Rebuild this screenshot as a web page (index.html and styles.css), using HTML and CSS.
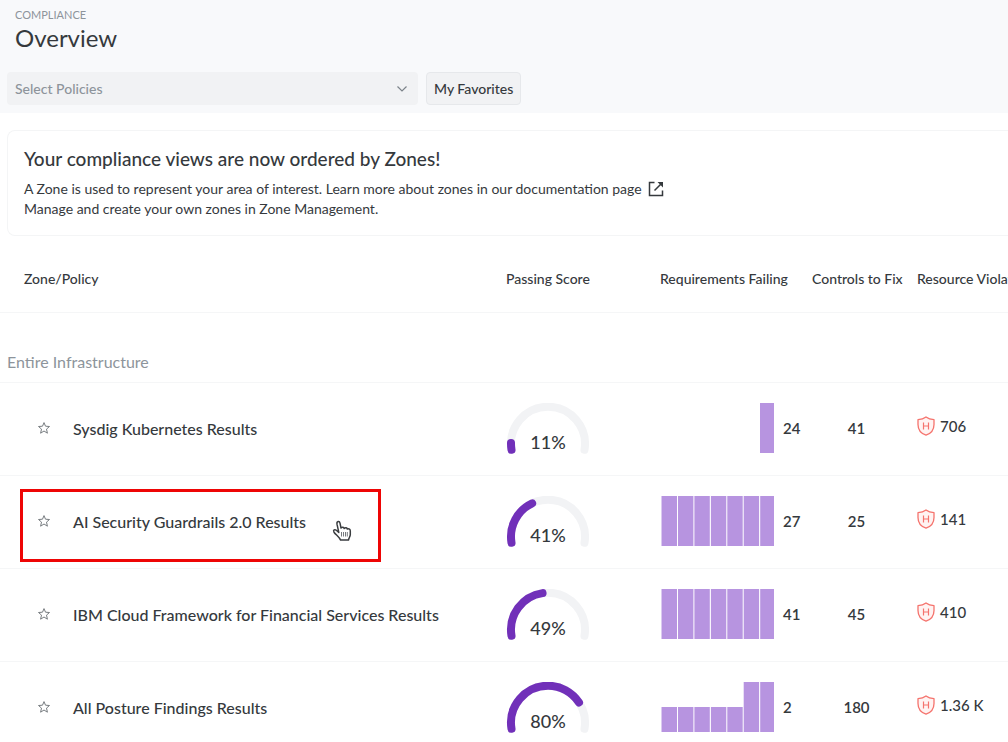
FILE: index.html
```html
<!DOCTYPE html>
<html lang="en">
<head>
<meta charset="utf-8">
<meta name="viewport" content="width=device-width, initial-scale=1">
<title>Compliance Overview</title>
<link rel="stylesheet" href="styles.css">
</head>
<body>
<svg class="symbols" aria-hidden="true">
  <symbol id="star" viewBox="0 0 14 14">
    <path d="M7 1.6 8.5 5.2 12.5 5.5 9.5 8.1 10.4 12.2 7 10 3.6 12.2 4.5 8.1 1.5 5.5 5.5 5.2Z" fill="none" stroke="#777c80" stroke-linejoin="round"/>
  </symbol>
  <symbol id="shield" viewBox="0 0 18 20">
    <path d="M9 1C11.2 2.7 13.8 3.5 17 3.7V8.500C17 14 14 17.500 9 19.200 4 17.500 1 14 1 8.500V3.700C4.200 3.500 6.800 2.700 9 1Z" fill="#fff3f2" stroke="#f5736d" stroke-width="1.300" stroke-linejoin="round"/>
    <path d="M6.500 6.500V13.500M11.500 6.500V13.500M6.500 10H11.500" fill="none" stroke="#f5736d" stroke-width="1.200"/>
  </symbol>
</svg>
<div class="page">
  <header class="top">
    <p class="crumb">COMPLIANCE</p>
    <h1 class="title">Overview</h1>
    <div class="filters">
      <div class="picker">
        <select class="select" aria-label="Select Policies"><option>Select Policies</option></select>
        <svg class="chevron" width="12" height="8" viewBox="0 0 12 8" aria-hidden="true"><path d="M1.500 1.500 6 6 10.500 1.500" fill="none" stroke="#7c838a" stroke-width="1.200"/></svg>
      </div>
      <button class="button" type="button">My Favorites</button>
    </div>
  </header>
  <main>
    <section class="notice">
      <h2 class="notice-title">Your compliance views are now ordered by Zones!</h2>
      <p class="notice-text">A Zone is used to represent your area of interest. Learn more about zones in our <a class="link" href="#docs">documentation page<svg class="external" width="16" height="16" viewBox="0 0 16 16" aria-hidden="true"><path d="M6.500 1.500H1.500V14.500H14.500V9.500M6.500 9.500 13.500 2.500" fill="none" stroke="#35393d" stroke-width="1.500"/><path d="M9.500 1H15V6.500Z" fill="#35393d"/></svg></a></p>
      <p class="notice-text">Manage and create your own zones in <a class="link" href="#zones">Zone Management.</a></p>
    </section>
    <table class="table">
      <thead>
        <tr>
          <th class="col-name" scope="col">Zone/Policy</th>
          <th class="col-score" scope="col">Passing Score</th>
          <th class="col-req" scope="col">Requirements Failing</th>
          <th class="col-controls" scope="col">Controls to Fix</th>
          <th class="col-violations" scope="col">Resource Violations</th>
        </tr>
      </thead>
      <tbody>
        <tr class="group"><th colspan="5" scope="colgroup">Entire Infrastructure</th></tr>
        <tr class="row">
          <td><div class="name"><button class="fav" type="button" aria-label="Add to favorites"><svg width="14" height="14"><use href="#star"/></svg></button><a class="policy" href="#kubernetes">Sysdig Kubernetes Results</a></div></td>
          <td class="score"><svg class="gauge" width="84" height="52" viewBox="0 0 84 52"><path class="track" d="M5.500 46.800A37 37 0 1 1 78.500 46.800"/><path class="value" pathLength="198" stroke-dasharray="10.700 400" d="M5.500 46.800A37 37 0 1 1 78.500 46.800"/><text class="percent" x="42" y="46">11%</text></svg></td>
          <td><div class="req"><svg class="bars" width="113" height="50" viewBox="0 0 113 50"><path d="M99 0H113V50H99Z"/></svg><span>24</span></div></td>
          <td class="controls">41</td>
          <td><div class="violations"><svg width="18" height="20"><use href="#shield"/></svg><span>706</span></div></td>
        </tr>
        <tr class="row">
          <td class="marked"><div class="name"><button class="fav" type="button" aria-label="Add to favorites"><svg width="14" height="14"><use href="#star"/></svg></button><a class="policy" href="#ai">AI Security Guardrails 2.0 Results</a></div>
            <div class="highlight"><svg class="pointer" width="20" height="22" viewBox="0 0 20 22" aria-hidden="true"><path d="M6.800 12.500 5 4.200C4.500 1 7.500 .800 8 3.200L9 8C10.200 6.800 11.800 7.200 12.200 8.500 13.500 7.300 15 7.800 15.300 9 17 8.300 18.500 9.500 18.300 11.300V14.500C18.300 16.500 17 17.500 16.500 20H8.500C7.500 17 4 15 2 12.200 .800 10 2.800 9 4.300 10.300L6.800 12.500Z" fill="#fff" stroke="#3a3d40" stroke-width="1.500" stroke-linejoin="round"/><path d="M9.500 12V16.500M11.500 12V16.500M13.500 12V16.500M15.300 12V16.500" stroke="#777b7f"/></svg></div></td>
          <td class="score"><svg class="gauge" width="84" height="52" viewBox="0 0 84 52"><path class="track" d="M5.500 46.800A37 37 0 1 1 78.500 46.800"/><path class="value" pathLength="198" stroke-dasharray="73.700 400" d="M5.500 46.800A37 37 0 1 1 78.500 46.800"/><text class="percent" x="42" y="46">41%</text></svg></td>
          <td><div class="req"><svg class="bars" width="113" height="50" viewBox="0 0 113 50"><path d="M.500 0h15.500v50H.500ZM17 0h15.400v50H17ZM33.400 0h15.400v50H33.400ZM49.900 0h15.400v50H49.900ZM66.300 0h15.400v50H66.300ZM82.700 0h15.400v50H82.700ZM99.200 0H113v50H99.200Z"/></svg><span>27</span></div></td>
          <td class="controls">25</td>
          <td><div class="violations"><svg width="18" height="20"><use href="#shield"/></svg><span>141</span></div></td>
        </tr>
        <tr class="row">
          <td><div class="name"><button class="fav" type="button" aria-label="Add to favorites"><svg width="14" height="14"><use href="#star"/></svg></button><a class="policy" href="#ibm">IBM Cloud Framework for Financial Services Results</a></div></td>
          <td class="score"><svg class="gauge" width="84" height="52" viewBox="0 0 84 52"><path class="track" d="M5.500 46.800A37 37 0 1 1 78.500 46.800"/><path class="value" pathLength="198" stroke-dasharray="90.500 400" d="M5.500 46.800A37 37 0 1 1 78.500 46.800"/><text class="percent" x="42" y="46">49%</text></svg></td>
          <td><div class="req"><svg class="bars" width="113" height="50" viewBox="0 0 113 50"><path d="M.500 0h15.500v50H.500ZM17 0h15.400v50H17ZM33.400 0h15.400v50H33.400ZM49.900 0h15.400v50H49.900ZM66.300 0h15.400v50H66.300ZM82.700 0h15.400v50H82.700ZM99.200 0H113v50H99.200Z"/></svg><span>41</span></div></td>
          <td class="controls">45</td>
          <td><div class="violations"><svg width="18" height="20"><use href="#shield"/></svg><span>410</span></div></td>
        </tr>
        <tr class="row">
          <td><div class="name"><button class="fav" type="button" aria-label="Add to favorites"><svg width="14" height="14"><use href="#star"/></svg></button><a class="policy" href="#posture">All Posture Findings Results</a></div></td>
          <td class="score"><svg class="gauge" width="84" height="52" viewBox="0 0 84 52"><path class="track" d="M5.500 46.800A37 37 0 1 1 78.500 46.800"/><path class="value" pathLength="198" stroke-dasharray="155.600 400" d="M5.500 46.800A37 37 0 1 1 78.500 46.800"/><text class="percent" x="42" y="46">80%</text></svg></td>
          <td><div class="req"><svg class="bars" width="113" height="50" viewBox="0 0 113 50"><path d="M.500 25h15.500v25H.500ZM17 25h15.400v25H17ZM33.400 25h15.400v25H33.400ZM49.900 25h15.400v25H49.900ZM66.300 25h15.400v25H66.300ZM82.700 0h15.400v50H82.700ZM99.200 0H113v50H99.200Z"/></svg><span>2</span></div></td>
          <td class="controls">180</td>
          <td><div class="violations"><svg width="18" height="20"><use href="#shield"/></svg><span>1.36 K</span></div></td>
        </tr>
      </tbody>
    </table>
  </main>
</div>
</body>
</html>
```

FILE: styles.css
```css
* {
  box-sizing: border-box;
}

body {
  margin: 0;
  background: #fff;
  color: #35393d;
  font-family: Lato, "Open Sans", sans-serif;
  font-size: 15px;
  font-weight: 500;
}

h1, h2, p {
  margin: 0;
}

svg {
  display: block;
  flex: none;
}

button, select {
  font: inherit;
  color: inherit;
}

a {
  color: inherit;
  text-decoration: none;
}

.symbols {
  display: none;
}

.page {
  overflow: hidden;
}

.top {
  padding: 8px 7px;
  background: #f8f9fb;
}

.crumb {
  padding-left: 8px;
  color: #8d949b;
  font-size: 11px;
  font-weight: 400;
  line-height: 14px;
}

.title {
  padding-left: 8px;
  font-size: 24px;
  font-weight: 400;
  line-height: 32px;
}

.filters {
  display: flex;
  gap: 8px;
  margin-top: 18px;
}

.picker {
  display: grid;
  flex: 0 1 411px;
  align-items: center;
}

.select, .chevron {
  grid-area: 1 / 1;
}

.chevron {
  justify-self: end;
  margin-right: 10px;
  pointer-events: none;
}

.select {
  width: 100%;
  height: 33px;
  padding: 0 8px;
  border: 0;
  border-radius: 4px;
  background: #f1f2f4;
  color: #8d949b;
  font-size: 14px;
  appearance: none;
}

.button {
  height: 33px;
  padding: 0 7px;
  border: 1px solid #e6e8eb;
  border-radius: 4px;
  background: #f1f2f4;
  font-size: 14px;
}

.notice {
  margin: 17px 0 0 7px;
  padding: 16px;
  border: 1px solid #f4f5f6;
  border-right: 0;
  border-radius: 8px 0 0 8px;
}

.notice-title {
  margin-bottom: 8px;
  font-size: 19px;
  font-weight: 500;
  line-height: 24px;
}

.notice-text {
  font-size: 14px;
  font-weight: 400;
  line-height: 20px;
}

.link {
  display: inline-flex;
  align-items: center;
  gap: 6px;
}

.table {
  width: 100%;
  border-collapse: separate;
  border-spacing: 0;
  table-layout: fixed;
}

th, td {
  padding: 0 8px;
  border-bottom: 1px solid #f5f6f7;
  text-align: left;
  white-space: nowrap;
}

thead th {
  height: 77px;
  padding-top: 8px;
  font-size: 14px;
  font-weight: 500;
}

thead .col-name {
  padding-left: 24px;
}

.col-score {
  width: 154px;
}

.col-req {
  width: 152px;
}

.col-controls {
  width: 105px;
}

.col-violations {
  width: 99px;
}

.group th {
  height: 70px;
  padding: 28px 7px 0;
  color: #8d949b;
  font-size: 16px;
  font-weight: 400;
}

.row td {
  height: 93px;
  padding-bottom: 2px;
}

.row .score {
  padding-bottom: 0;
}

.name {
  display: flex;
  align-items: center;
  gap: 22px;
  padding-left: 29px;
}

.fav {
  padding: 0;
  border: 0;
  background: none;
}

.policy {
  font-size: 16px;
}

.marked {
  position: relative;
}

.highlight {
  position: absolute;
  top: 13px;
  left: 20px;
  width: 361px;
  height: 73px;
  border: 3px solid #ee0505;
  pointer-events: none;
}

.pointer {
  position: absolute;
  top: 28px;
  right: 26px;
}

.track, .value {
  fill: none;
  stroke: #f2f3f5;
  stroke-width: 8px;
  stroke-linecap: round;
}

.value {
  stroke: #7130b9;
}

.percent {
  fill: #35393d;
  font-size: 18px;
  text-anchor: middle;
}

.req {
  display: flex;
  align-items: center;
  gap: 9px;
  padding-left: 1px;
  font-weight: 600;
}

.bars {
  fill: #b794e0;
}

.controls {
  text-align: center;
  font-weight: 600;
}

.violations {
  display: flex;
  align-items: center;
  gap: 5px;
  padding-bottom: 4px;
}
```
